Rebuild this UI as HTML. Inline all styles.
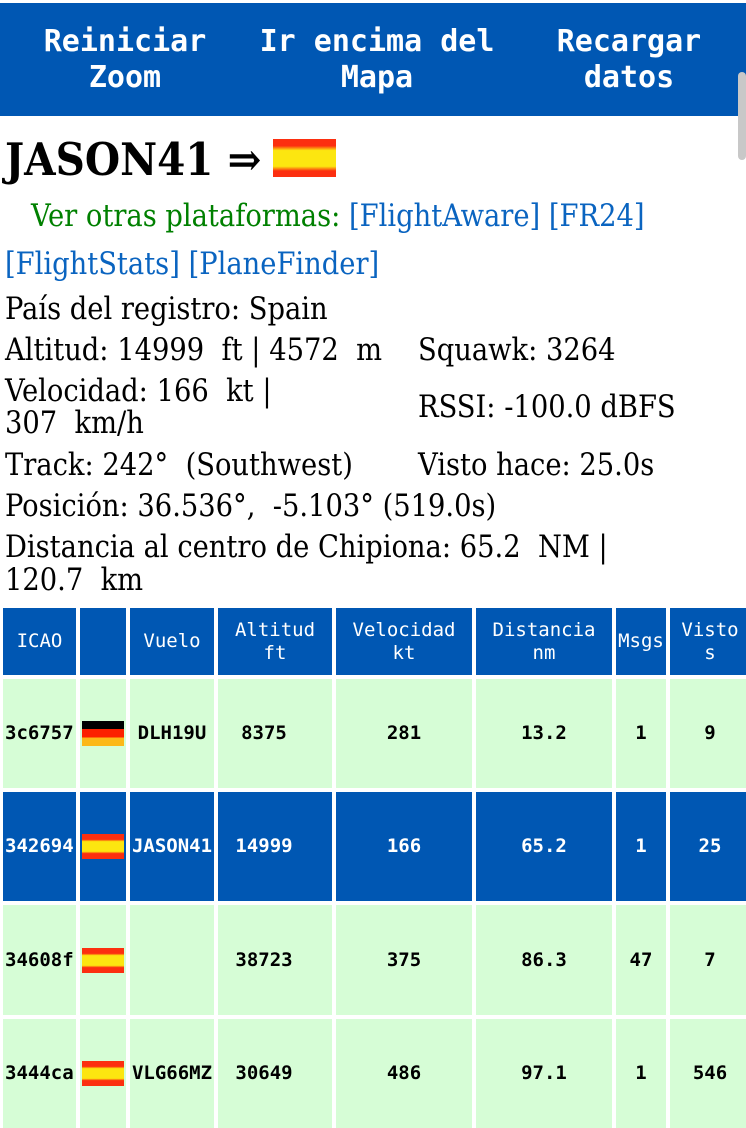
<!DOCTYPE html>
<html><head><meta charset="utf-8">
<style>
html,body{margin:0;padding:0;background:#fff;width:746px;height:1128px;overflow:hidden;position:relative}
.a{position:absolute;white-space:nowrap}
.s{font-family:"DejaVu Serif Condensed","DejaVu Serif","Liberation Serif",serif;font-stretch:condensed;font-size:30.4px;line-height:30px;color:#000}
.nav{position:absolute;left:0;top:3px;width:746px;height:113px;background:#0057b3}
.btn{position:absolute;top:24px;font-family:"DejaVu Sans Mono","Liberation Mono",monospace;font-weight:bold;font-size:30px;line-height:36px;color:#fff;text-align:center}
.c{position:absolute;display:flex;align-items:center;justify-content:center;font-family:"DejaVu Sans Mono","Liberation Mono",monospace;font-size:19px;font-weight:bold;text-align:center;line-height:23px}
.h{background:#0057b3;color:#fff;font-weight:normal}
.g{background:#d6fdd6;color:#000}
.b{background:#0057b3;color:#fff}
.es{display:block;width:42px;height:25px;background:linear-gradient(#fc2f10 0,#fc2f10 22%,#fce610 30%,#fce610 70%,#fc2f10 78%,#fc2f10 100%)}
.de{display:block;width:42px;height:25px;background:linear-gradient(#000 0,#000 33%,#fc2000 33%,#fc2000 66%,#fcb818 66%)}
a{color:#0a64c0;text-decoration:none}
</style></head><body>
<div class="nav"></div>
<div class="btn" style="left:25px;width:200px">Reiniciar<br>Zoom</div>
<div class="btn" style="left:237px;width:280px">Ir encima del<br>Mapa</div>
<div class="btn" style="left:529px;width:200px">Recargar<br>datos</div>
<div class="a" style="left:738px;top:72px;width:8px;height:88px;background:#c8c8c8;border-radius:4px"></div>

<div class="a s" style="left:5px;top:132px;font-size:45px;line-height:56px;font-weight:bold">JASON41 ⇒</div>
<div class="a" style="left:273px;top:139px;width:63px;height:38px;background:linear-gradient(#fc2f10 0,#fc2f10 18%,#fce610 30%,#fce610 72%,#fc2f10 84%,#fc2f10 100%)"></div>

<div class="a s" style="left:31px;top:202px;color:#008000">Ver otras plataformas: <a>[FlightAware]</a> <a>[FR24]</a></div>
<div class="a s" style="left:5px;top:250px"><a>[FlightStats]</a> <a>[PlaneFinder]</a></div>
<div class="a s" style="left:5px;top:295px">País del registro: Spain</div>
<div class="a s" style="left:5px;top:336px">Altitud: 14999&nbsp; ft | 4572&nbsp; m</div>
<div class="a s" style="left:418px;top:336px">Squawk: 3264</div>
<div class="a s" style="left:5px;top:377px">Velocidad: 166&nbsp; kt |</div>
<div class="a s" style="left:5px;top:409px">307&nbsp; km/h</div>
<div class="a s" style="left:418px;top:393px">RSSI: -100.0 dBFS</div>
<div class="a s" style="left:5px;top:451px">Track: 242°&nbsp; (Southwest)</div>
<div class="a s" style="left:418px;top:451px">Visto hace: 25.0s</div>
<div class="a s" style="left:5px;top:492px">Posición: 36.536°,&nbsp; -5.103° (519.0s)</div>
<div class="a s" style="left:5px;top:533px">Distancia al centro de Chipiona: 65.2&nbsp; NM |</div>
<div class="a s" style="left:5px;top:566px">120.7&nbsp; km</div>

<div class="c h" style="left:3px;top:608px;width:73px;height:67px">ICAO</div>
<div class="c h" style="left:80px;top:608px;width:46px;height:67px"></div>
<div class="c h" style="left:130px;top:608px;width:84px;height:67px">Vuelo</div>
<div class="c h" style="left:218px;top:608px;width:114px;height:67px">Altitud<br>ft</div>
<div class="c h" style="left:336px;top:608px;width:136px;height:67px">Velocidad<br>kt</div>
<div class="c h" style="left:476px;top:608px;width:136px;height:67px">Distancia<br>nm</div>
<div class="c h" style="left:616px;top:608px;width:50px;height:67px">Msgs</div>
<div class="c h" style="left:670px;top:608px;width:80px;height:67px">Visto<br>s</div>

<div class="c g" style="left:3px;top:679px;width:73px;height:109px;justify-content:flex-start;padding-left:2px;box-sizing:border-box">3c6757</div>
<div class="c g" style="left:80px;top:679px;width:46px;height:109px"><span class="de"></span></div>
<div class="c g" style="left:130px;top:679px;width:84px;height:109px">DLH19U</div>
<div class="c g" style="left:218px;top:679px;width:92px;height:109px">8375</div>
<div class="c g" style="left:310px;top:679px;width:22px;height:109px"></div>
<div class="c g" style="left:336px;top:679px;width:136px;height:109px">281</div>
<div class="c g" style="left:476px;top:679px;width:136px;height:109px">13.2</div>
<div class="c g" style="left:616px;top:679px;width:50px;height:109px">1</div>
<div class="c g" style="left:670px;top:679px;width:80px;height:109px">9</div>

<div class="c b" style="left:3px;top:792px;width:73px;height:109px;justify-content:flex-start;padding-left:2px;box-sizing:border-box">342694</div>
<div class="c b" style="left:80px;top:792px;width:46px;height:109px"><span class="es"></span></div>
<div class="c b" style="left:130px;top:792px;width:84px;height:109px">JASON41</div>
<div class="c b" style="left:218px;top:792px;width:92px;height:109px">14999</div>
<div class="c b" style="left:310px;top:792px;width:22px;height:109px"></div>
<div class="c b" style="left:336px;top:792px;width:136px;height:109px">166</div>
<div class="c b" style="left:476px;top:792px;width:136px;height:109px">65.2</div>
<div class="c b" style="left:616px;top:792px;width:50px;height:109px">1</div>
<div class="c b" style="left:670px;top:792px;width:80px;height:109px">25</div>

<div class="c g" style="left:3px;top:905px;width:73px;height:110px;justify-content:flex-start;padding-left:2px;box-sizing:border-box">34608f</div>
<div class="c g" style="left:80px;top:905px;width:46px;height:110px"><span class="es"></span></div>
<div class="c g" style="left:130px;top:905px;width:84px;height:110px"></div>
<div class="c g" style="left:218px;top:905px;width:92px;height:110px">38723</div>
<div class="c g" style="left:310px;top:905px;width:22px;height:110px"></div>
<div class="c g" style="left:336px;top:905px;width:136px;height:110px">375</div>
<div class="c g" style="left:476px;top:905px;width:136px;height:110px">86.3</div>
<div class="c g" style="left:616px;top:905px;width:50px;height:110px">47</div>
<div class="c g" style="left:670px;top:905px;width:80px;height:110px">7</div>

<div class="c g" style="left:3px;top:1019px;width:73px;height:109px;justify-content:flex-start;padding-left:2px;box-sizing:border-box">3444ca</div>
<div class="c g" style="left:80px;top:1019px;width:46px;height:109px"><span class="es"></span></div>
<div class="c g" style="left:130px;top:1019px;width:84px;height:109px">VLG66MZ</div>
<div class="c g" style="left:218px;top:1019px;width:92px;height:109px">30649</div>
<div class="c g" style="left:310px;top:1019px;width:22px;height:109px"></div>
<div class="c g" style="left:336px;top:1019px;width:136px;height:109px">486</div>
<div class="c g" style="left:476px;top:1019px;width:136px;height:109px">97.1</div>
<div class="c g" style="left:616px;top:1019px;width:50px;height:109px">1</div>
<div class="c g" style="left:670px;top:1019px;width:80px;height:109px">546</div>
</body></html>
